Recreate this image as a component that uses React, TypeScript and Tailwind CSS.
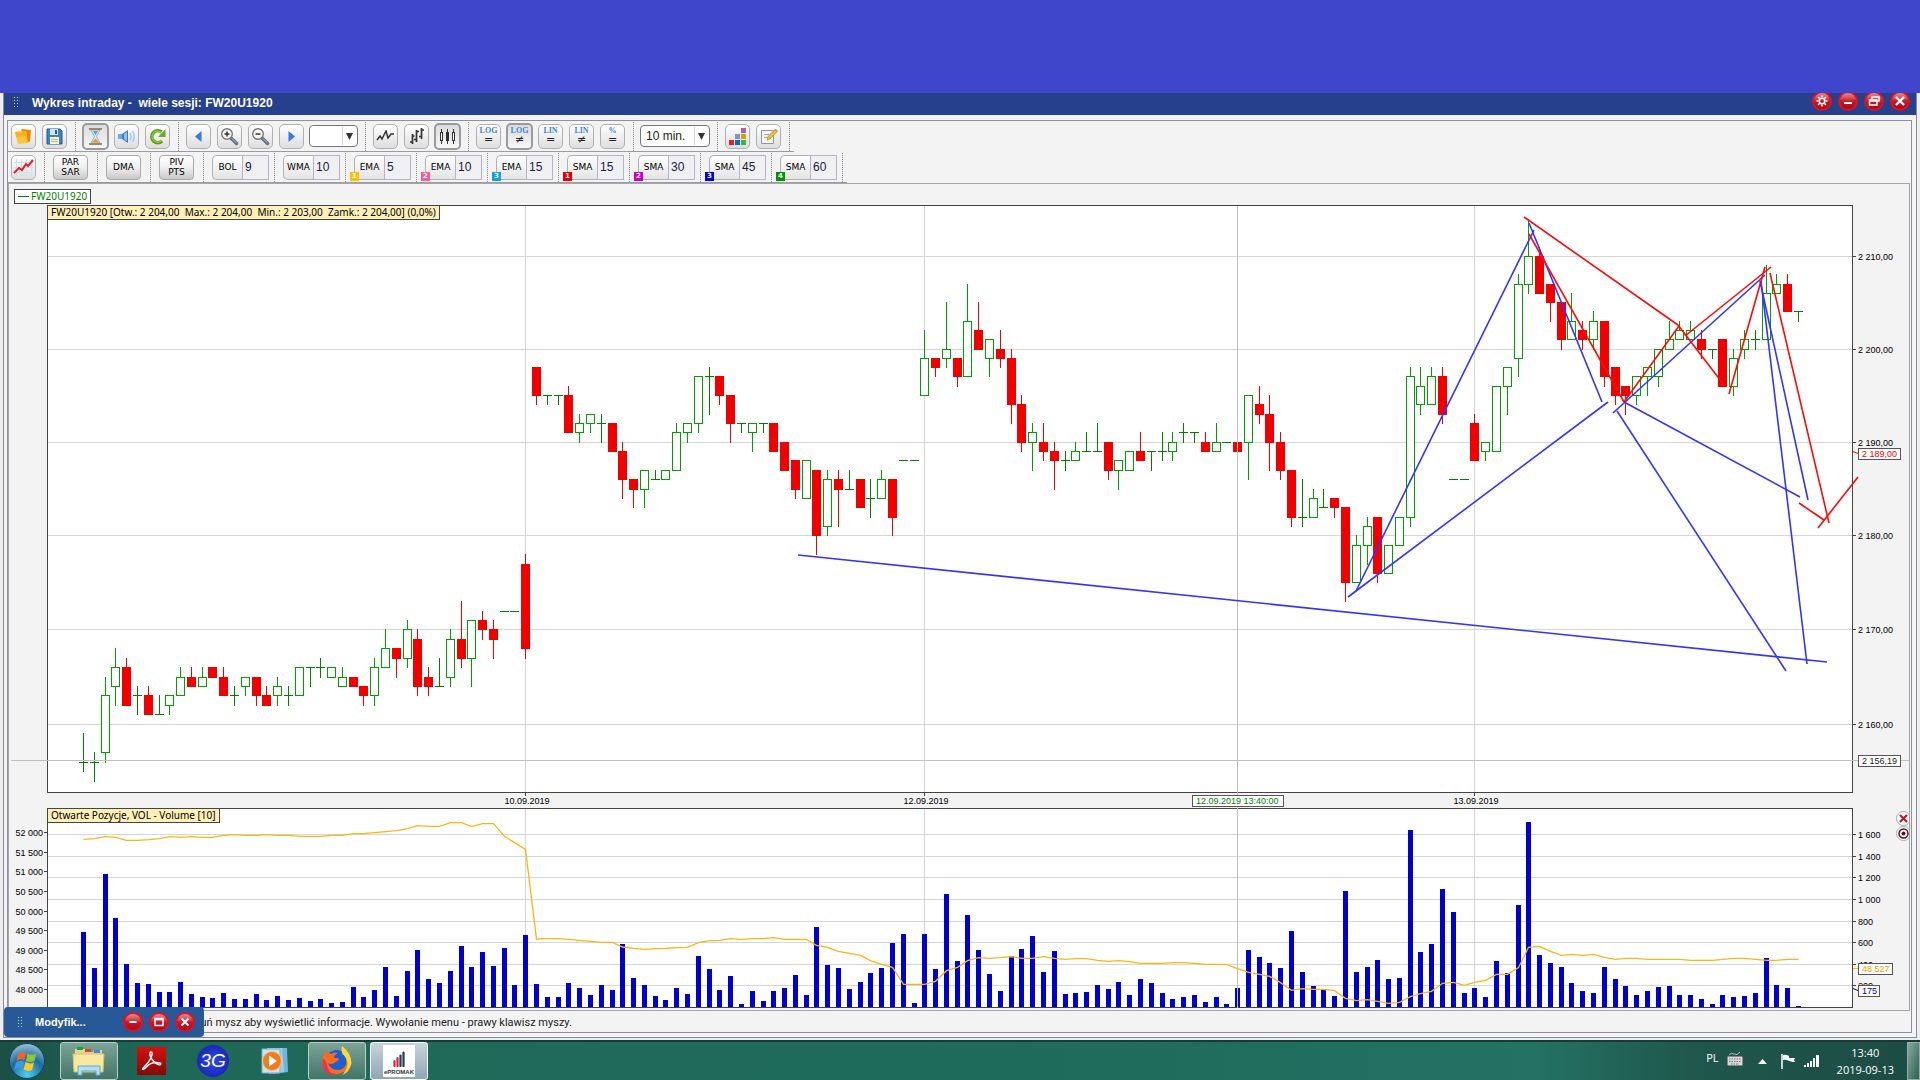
import React from "react";

// open, close, high, low - offsets from PRICE_BASE, one entry per 10 min. candle
const PRICE_BASE = 2100;
const CANDLES: number[][] = [
    [56, 56, 59, 55], [56, 56, 57, 54], [57, 63, 65, 56], [64, 66, 68, 62], [66, 62, 67, 62],
    [63, 63, 64, 61], [63, 61, 64, 61], [61, 61, 63, 61], [62, 63, 63, 61], [63, 65, 66, 63],
    [65, 64, 66, 64], [64, 65, 66, 64], [66, 65, 66, 65], [65, 63, 66, 63], [63, 63, 64, 62],
    [64, 65, 65, 63], [65, 63, 65, 62], [63, 62, 64, 62], [63, 64, 65, 62], [63, 63, 64, 62],
    [63, 66, 66, 63], [66, 66, 66, 64], [66, 66, 67, 65], [65, 66, 66, 65], [64, 65, 66, 64],
    [65, 64, 65, 64], [64, 63, 64, 62], [63, 66, 67, 62], [66, 68, 70, 66], [68, 67, 68, 65],
    [67, 70, 71, 66], [69, 64, 70, 63], [65, 64, 66, 63], [64, 64, 67, 64], [65, 69, 70, 64],
    [69, 67, 73, 66], [67, 71, 71, 64], [71, 70, 72, 69], [70, 69, 71, 67], [72, 72, 72, 72],
    [72, 72, 72, 72], [77, 68, 78, 67], [98, 95, 98, 94], [95, 95, 95, 94], [95, 95, 95, 94],
    [95, 91, 96, 91], [91, 92, 93, 90], [92, 93, 93, 91], [92, 92, 93, 90], [92, 89, 92, 89],
    [89, 86, 90, 84], [86, 85, 86, 83], [85, 87, 87, 83], [86, 86, 87, 86], [86, 87, 87, 86],
    [87, 91, 92, 87], [91, 92, 92, 90], [92, 97, 97, 91], [97, 97, 98, 93], [97, 95, 97, 94],
    [95, 92, 95, 90], [92, 92, 92, 91], [91, 92, 92, 89], [92, 92, 92, 91], [92, 89, 92, 89],
    [90, 87, 90, 87], [88, 85, 88, 84], [84, 88, 88, 84], [87, 80, 87, 78], [81, 86, 87, 80],
    [86, 85, 87, 81], [85, 85, 87, 85], [86, 83, 86, 83], [84, 84, 86, 82], [84, 86, 87, 84],
    [86, 82, 86, 80], [88, 88, 88, 88], [88, 88, 88, 88], [95, 99, 102, 95], [99, 98, 99, 97],
    [99, 100, 105, 98], [99, 97, 99, 96], [97, 103, 107, 97], [102, 100, 105, 100], [99, 101, 101, 97],
    [100, 99, 102, 98], [99, 94, 100, 92], [94, 90, 95, 89], [90, 91, 92, 87], [90, 89, 92, 88],
    [89, 88, 90, 85], [88, 88, 89, 87], [88, 89, 90, 88], [89, 89, 91, 89], [89, 89, 92, 89],
    [90, 87, 90, 86], [87, 88, 88, 85], [87, 89, 89, 87], [89, 88, 91, 88], [89, 89, 89, 87],
    [89, 89, 91, 88], [89, 90, 91, 88], [91, 91, 92, 90], [91, 91, 91, 90], [90, 89, 91, 89],
    [89, 90, 92, 89], [90, 90, 90, 90], [90, 89, 90, 89], [90, 95, 95, 86], [94, 93, 96, 92],
    [93, 90, 95, 87], [90, 87, 91, 86], [87, 82, 87, 81], [82, 82, 86, 81], [82, 84, 85, 82],
    [83, 83, 85, 83], [84, 83, 84, 82], [83, 75, 83, 73], [75, 79, 80, 75], [79, 81, 82, 77],
    [82, 76, 82, 75], [76, 79, 79, 76], [79, 82, 82, 79], [82, 97, 98, 81], [94, 96, 98, 93],
    [94, 97, 98, 94], [97, 93, 98, 92], [86, 86, 86, 86], [86, 86, 86, 86], [92, 88, 93, 88],
    [89, 90, 90, 88], [89, 96, 96, 89], [96, 98, 98, 93], [99, 107, 108, 97], [107, 110, 114, 106],
    [110, 106, 111, 106], [107, 105, 107, 103], [105, 101, 105, 100], [101, 103, 106, 101], [102, 101, 103, 100],
    [101, 103, 104, 100], [103, 97, 103, 96], [98, 95, 98, 94], [96, 95, 96, 93], [95, 97, 97, 94],
    [97, 98, 98, 95], [97, 100, 100, 96], [100, 101, 103, 100], [101, 102, 103, 101], [101, 102, 103, 101],
    [101, 100, 102, 99], [100, 100, 100, 99], [101, 96, 101, 96], [96, 99, 100, 95], [100, 101, 102, 99],
    [101, 101, 102, 100], [101, 106, 109, 101], [106, 107, 108, 106], [107, 104, 108, 104], [104, 104, 104, 103],
];

// thirds of a pixel, measured from the top of the volume strip
const VOLUME = [
    426, 534, 252, 384, 522, 579, 582, 606, 606, 576, 612, 621, 624, 609, 627, 627, 612, 630, 618, 630,
    624, 633, 627, 639, 636, 591, 621, 600, 531, 618, 543, 480, 567, 579, 543, 468, 531, 486, 528, 474,
    585, 435, 582, 621, 621, 579, 594, 615, 585, 600, 462, 564, 585, 618, 630, 594, 612, 498, 537, 600,
    558, 642, 603, 633, 603, 594, 555, 615, 411, 525, 534, 597, 576, 549, 534, 459, 432, 639, 432, 537,
    312, 513, 375, 480, 552, 603, 498, 477, 438, 546, 483, 612, 609, 606, 585, 597, 576, 615, 567, 579,
    609, 627, 621, 615, 636, 621, 642, 594, 480, 501, 519, 534, 423, 546, 588, 600, 618, 303, 546, 531,
    510, 567, 564, 120, 486, 462, 297, 366, 609, 594, 621, 513, 549, 345, 96, 495, 519, 531, 579, 603,
    609, 531, 567, 588, 615, 603, 591, 588, 615, 615, 627, 642, 615, 621, 618, 609, 504, 585, 594, 648,
];

const OPEN_INTEREST = [
    148, 146, 140, 142, 151, 151, 149, 146, 140, 142, 140, 142, 142, 136, 134, 136, 136, 134, 136, 136,
    139, 139, 139, 136, 136, 131, 131, 128, 125, 122, 116, 107, 109, 109, 98, 98, 110, 101, 101, 139,
    158, 178, 447, 446, 446, 448, 451, 454, 457, 457, 471, 475, 478, 476, 475, 473, 472, 458, 452, 451,
    446, 448, 446, 446, 443, 448, 448, 448, 466, 472, 484, 490, 496, 512, 523, 532, 583, 583, 583, 574,
    542, 532, 512, 503, 505, 503, 500, 505, 505, 500, 505, 508, 506, 506, 511, 514, 512, 515, 520, 520,
    520, 518, 518, 520, 523, 523, 523, 536, 547, 553, 559, 578, 601, 596, 598, 598, 602, 625, 632, 629,
    634, 640, 637, 620, 611, 604, 580, 577, 586, 577, 571, 553, 553, 533, 472, 469, 484, 496, 493, 496,
    493, 502, 508, 505, 505, 508, 508, 508, 508, 511, 511, 511, 508, 505, 505, 508, 511, 511, 508, 508,
];

const BLUE_LINES = [
    [798, 555, 1827, 662], [1356, 591, 1534, 230], [1529, 223, 1602, 402], [1348, 597, 1608, 402],
    [1613, 413, 1765, 275], [1624, 402, 1800, 497], [1617, 411, 1786, 671], [1760, 281, 1808, 500],
    [1761, 281, 1807, 664],
];

const RED_LINES = [
    [1524, 217, 1678, 325], [1529, 234, 1624, 402], [1624, 402, 1679, 326], [1678, 325, 1724, 385],
    [1729, 394, 1765, 267], [1685, 336, 1771, 267], [1770, 273, 1829, 523], [1799, 503, 1824, 520],
    [1818, 528, 1858, 477],
];

const SESSIONS = [
    { x: 525, label: "10.09.2019" },
    { x: 924, label: "12.09.2019" },
    { x: 1474, label: "13.09.2019" },
];

const VOL_TICKS = [
    { y: 834, label: "1 600" }, { y: 856, label: "1 400" }, { y: 877, label: "1 200" }, { y: 899, label: "1 000" },
    { y: 921, label: "800" }, { y: 942, label: "600" }, { y: 964, label: "400" }, { y: 985, label: "200" },
];

const OI_TICKS = [
    { y: 832, label: "52 000" }, { y: 852, label: "51 500" }, { y: 871, label: "51 000" },
    { y: 891, label: "50 500" }, { y: 911, label: "50 000" }, { y: 930, label: "49 500" },
    { y: 950, label: "49 000" }, { y: 969, label: "48 500" }, { y: 989, label: "48 000" },
];

const CURSOR_X = 1237;
const AXIS_TEXT = "font-['Liberation_Sans'] text-[9px]";

const candleX = (i: number) => Math.floor(83.5 + i * 10.786);
const priceY = (p: number) => Math.floor(724.35 + 20451 * Math.log(2160 / (PRICE_BASE + p)));

function Candle({ i }: { i: number }) {
    const [open, close, high, low] = CANDLES[i];
    const x = candleX(i);
    const top = priceY(Math.max(open, close));
    const bottom = priceY(Math.min(open, close));
    const hi = priceY(high);
    const lo = priceY(low) + 1;

    if (open === close) {
        return (
            <g fill="#007f00">
                <rect x={x - 4} y={top} width={9} height={1} />
                {lo - hi > 1 && <rect x={x} y={hi} width={1} height={lo - hi} />}
            </g>
        );
    }
    if (open > close) {
        return (
            <g fill="#f20000">
                <rect x={x} y={hi} width={1} height={lo - hi} />
                <rect x={x - 4} y={top} width={9} height={bottom - top + 1} />
            </g>
        );
    }
    return (
        <g>
            <rect x={x} y={hi} width={1} height={lo - hi} fill="#00a000" />
            <rect x={x - 3.5} y={top + 0.5} width={8} height={bottom - top} fill="#fff" stroke="#00a000" />
        </g>
    );
}

function AxisTag({ x, y, width, color, children }: { x: number; y: number; width: number; color: string; children: React.ReactNode }) {
    return (
        <g>
            <rect x={x + 0.5} y={y + 0.5} width={width} height={11} fill="#fff" stroke="#555" />
            <text x={x + 4} y={y + 9} fill={color} className={AXIS_TEXT}>{children}</text>
        </g>
    );
}

function PriceChart() {
    return (
        <svg viewBox="9 205 1900 603" className="block w-full h-auto">
            <rect x={47.5} y={205.5} width={1805} height={587} fill="#fff" stroke="#444" />
            <g fill="#d6d6d6">
                {[110, 100, 90, 80, 70, 60].map((p) => <rect key={p} x={48} y={priceY(p)} width={1804} height={1} />)}
                {SESSIONS.map((s) => <rect key={s.x} x={s.x} y={206} width={1} height={586} />)}
            </g>
            {CANDLES.map((_, i) => <Candle key={i} i={i} />)}
            <g fill="#c0c0c0">
                <rect x={11} y={760} width={1898} height={1} />
                <rect x={CURSOR_X} y={206} width={1} height={602} />
            </g>
            <g strokeWidth={1.6} fill="none">
                {BLUE_LINES.map((l, i) => <line key={i} x1={l[0]} y1={l[1]} x2={l[2]} y2={l[3]} stroke="#3434fa" />)}
                {RED_LINES.map((l, i) => <line key={i} x1={l[0]} y1={l[1]} x2={l[2]} y2={l[3]} stroke="#fa0a0a" />)}
            </g>
            {[110, 100, 90, 80, 70, 60].map((p) => (
                <g key={p}>
                    <rect x={1853} y={priceY(p)} width={3} height={1} fill="#444" />
                    <text x={1858} y={priceY(p) + 4} className={AXIS_TEXT}>{`2 ${PRICE_BASE + p - 2000},00`}</text>
                </g>
            ))}
            <path d="M1853 451.500L1858 453.500" stroke="#f20000" />
            <AxisTag x={1858} y={448} width={42} color="#f20000">2 189,00</AxisTag>
            <AxisTag x={1858} y={755} width={42} color="#222">2 156,19</AxisTag>
            {SESSIONS.map((s) => (
                <g key={s.x}>
                    <rect x={s.x} y={793} width={1} height={3} fill="#444" />
                    <text x={s.x + 2} y={804} textAnchor="middle" className={AXIS_TEXT}>{s.label}</text>
                </g>
            ))}
            <AxisTag x={1192} y={795} width={91} color="#008000">12.09.2019 13:40:00</AxisTag>
        </svg>
    );
}

function VolumeChart() {
    return (
        <svg viewBox="9 808 1900 202" className="block w-full h-auto">
            <rect x={47.5} y={808.5} width={1805} height={199} fill="#fff" stroke="#444" />
            <g fill="#d6d6d6">
                {VOL_TICKS.map((t) => <rect key={t.y} x={48} y={t.y} width={1804} height={1} />)}
                {SESSIONS.map((s) => <rect key={s.x} x={s.x} y={809} width={1} height={198} />)}
            </g>
            <g fill="#0000d0">
                {VOLUME.map((v, i) => {
                    const top = 790 + v / 3;
                    return <rect key={i} x={candleX(i) - 2} y={top} width={5} height={1007 - top} />;
                })}
            </g>
            <rect x={CURSOR_X} y={808} width={1} height={200} fill="#c0c0c0" />
            <polyline
                points={OPEN_INTEREST.map((v, i) => `${candleX(i) + 0.5},${790 + v / 3}`).join(" ")}
                fill="none"
                stroke="#fbb616"
                strokeWidth={1.3}
            />
            {OI_TICKS.map((t) => (
                <g key={t.y}>
                    <rect x={44} y={t.y} width={3} height={1} fill="#444" />
                    <text x={43} y={t.y + 4} textAnchor="end" className={AXIS_TEXT}>{t.label}</text>
                </g>
            ))}
            {VOL_TICKS.map((t) => (
                <g key={t.y}>
                    <rect x={1853} y={t.y} width={3} height={1} fill="#444" />
                    <text x={1858} y={t.y + 4} className={AXIS_TEXT}>{t.label}</text>
                </g>
            ))}
            <path d="M1853 968.500h5" stroke="#fbb616" />
            <AxisTag x={1858} y={963} width={34} color="#f0a000">48 527</AxisTag>
            <path d="M1853 988.500l5 2" stroke="#0000d0" />
            <AxisTag x={1858} y={985} width={21} color="#0000b0">175</AxisTag>
        </svg>
    );
}

function Slot({ children, label, pressed }: { children: React.ReactNode; label: string; pressed?: boolean }) {
    return (
        <div className="w-[31px] flex justify-center items-center">
            <button
                aria-label={label}
                className={pressed
                    ? "w-[27px] h-[27px] flex items-center justify-center rounded-[5px] border-2 border-[#9a9a9e] bg-linear-to-b from-[#dcdcde] to-[#f6f6f6]"
                    : "w-[25px] h-[25px] flex items-center justify-center rounded-[5px] border border-[#b0b0b2] bg-linear-to-b from-white to-[#dedede]"}
            >
                {children}
            </button>
        </div>
    );
}

function Sep() {
    return (
        <div className="w-[10px] flex justify-center">
            <div className="h-[29px] border-l border-dotted border-[#8a8a8e]" />
        </div>
    );
}

function Combo({ value, label, wide }: { value: string; label: string; wide?: boolean }) {
    return (
        <div className={wide ? "relative mx-[2px] w-[70px] h-[22px]" : "relative mx-[2px] w-[49px] h-[22px]"}>
            <select
                aria-label={label}
                defaultValue={value}
                className="appearance-none block w-full h-full rounded-[4px] border border-[#77777b] bg-white pl-[5px] text-[12px] leading-[20px] text-[#222]"
            >
                <option value={value}>{value}</option>
            </select>
            <div className="pointer-events-none absolute right-[2px] top-[2px] bottom-[2px] w-[14px] border-l border-[#d5d5d8] flex items-center justify-center">
                <svg width="7" height="7" viewBox="0 0 7 7"><path d="M0 0h7L3.500 7z" fill="#333" /></svg>
            </div>
        </div>
    );
}

function ScaleIcon({ top, sign }: { top: string; sign: string }) {
    return (
        <span className="flex flex-col items-center font-['Liberation_Serif']">
            <span className="text-[8px] leading-[8px] font-bold text-[#3f86d8]">{top}</span>
            <span className="font-['DejaVu_Sans'] text-[11px] leading-[10px] text-[#222]">{sign}</span>
        </span>
    );
}

const LABEL = "font-['DejaVu_Sans'] text-[9px] leading-[10px] text-black";

function WideButton({ lines }: { lines: string[] }) {
    return (
        <div className="w-[43px] flex items-center justify-center">
            <button className={`${LABEL} w-[35px] h-[25px] flex flex-col items-center justify-center rounded-[4px] border border-[#aaa] bg-linear-to-b from-white via-[#efefef] to-[#c8c8c8]`}>
                {lines.map((l) => <span key={l}>{l}</span>)}
            </button>
        </div>
    );
}

const INDICATORS = [
    { name: "BOL", value: "9" },
    { name: "WMA", value: "10" },
    { name: "EMA", value: "5", badge: "1", color: "bg-[#ffc000]" },
    { name: "EMA", value: "10", badge: "2", color: "bg-[#ff5a92]" },
    { name: "EMA", value: "15", badge: "3", color: "bg-[#10a0e8]" },
    { name: "SMA", value: "15", badge: "1", color: "bg-[#e80000]" },
    { name: "SMA", value: "30", badge: "2", color: "bg-[#c800c8]" },
    { name: "SMA", value: "45", badge: "3", color: "bg-[#0000e8]" },
    { name: "SMA", value: "60", badge: "4", color: "bg-[#009600]" },
];

function Indicator({ name, value, badge, color }: { name: string; value: string; badge?: string; color?: string }) {
    return (
        <div className="relative w-[61px] pl-[4px] flex items-center">
            <button className={`${LABEL} w-[30px] h-[25px] shrink-0 rounded-l-[5px] border border-r-0 border-[#b0b0b2] bg-linear-to-b from-white to-[#e4e4e4]`}>{name}</button>
            <input
                aria-label={`${name} ${badge ?? ""} okres`}
                defaultValue={value}
                className="w-[27px] h-[25px] border border-[#b4b4c8] bg-[#f0f0f2] pl-[2px] text-[12px] text-[#1c1c3c]"
            />
            {badge && (
                <span className={`${color} absolute left-0 -bottom-[1px] w-[9px] h-[9px] text-center font-['DejaVu_Sans'] text-[7px] leading-[9px] font-bold text-white`}>{badge}</span>
            )}
        </div>
    );
}

function MagnifierIcon({ plus }: { plus?: boolean }) {
    return (
        <svg width="19" height="19" viewBox="0 0 19 19">
            <path d="M11 11l5.500 5.500" stroke="#68758a" strokeWidth="3.500" strokeLinecap="round" />
            <path d="M12 11.500l4 4" stroke="#a6b4c8" strokeWidth="1" />
            <circle cx="7" cy="7" r="5.300" fill="#f7f7f2" stroke="#777" strokeWidth="1.400" />
            <path d={plus ? "M4.500 7h5M7 4.500v5" : "M4.500 7h5"} stroke="#333" strokeWidth="1.500" />
        </svg>
    );
}

function MainToolbar() {
    return (
        <div className="flex items-center w-fit h-[31px] border-b border-[#9c9ca6]">
            <Slot label="Otwórz">
                <svg width="19" height="19" viewBox="0 0 19 19">
                    <path d="M7 2l10 1-1 11-3 2z" fill="#e98b00" />
                    <path d="M1 5l11-1 2 12-10 1z" fill="#ffc53c" />
                    <path d="M1 5l11-1 1 5-11 1z" fill="#ffb01c" />
                </svg>
            </Slot>
            <Slot label="Zapisz">
                <svg width="17" height="17" viewBox="0 0 17 17">
                    <path d="M1 1h13l2 2v13H1z" fill="#3d83bc" stroke="#24598c" />
                    <rect x="4" y="1" width="8" height="6" fill="#cfe4f2" />
                    <rect x="9" y="2" width="2" height="4" fill="#28588c" />
                    <rect x="4" y="9" width="9" height="7" fill="#f6f2d8" />
                    <path d="M5 11.500h7M5 13.500h7" stroke="#c8bd8a" />
                </svg>
            </Slot>
            <Sep />
            <Slot label="Odświeżanie" pressed>
                <svg width="15" height="19" viewBox="0 0 15 19">
                    <path d="M3 3h9L8.500 9.500 12 16H3l3.500-6.500z" fill="#d9eaf5" stroke="#8fb4cc" />
                    <path d="M5 4h5L7.500 8z" fill="#5f9cc4" />
                    <path d="M4 15.500l3.500-4 3.500 4z" fill="#e89a30" />
                    <path d="M1 1h13v2H1zM1 16h13v2H1z" fill="#a08668" />
                </svg>
            </Slot>
            <Slot label="Dźwięk">
                <svg width="19" height="15" viewBox="0 0 19 15">
                    <path d="M1 5h4v5H1z" fill="#79a9dc" />
                    <path d="M5 5l6-4v13l-6-4z" fill="#3e82c6" />
                    <path d="M7 5l3-2v9l-3-2z" fill="#8ec0ec" />
                    <path d="M13 4q2 3.500 0 7M15.500 2q3.500 5.500 0 11" stroke="#9fc8ec" strokeWidth="1.500" fill="none" />
                </svg>
            </Slot>
            <Slot label="Przeładuj">
                <svg width="18" height="17" viewBox="0 0 18 17">
                    <path d="M13 13A6 6 0 1 1 12.500 4" fill="none" stroke="#5f9a1c" strokeWidth="3.600" />
                    <path d="M12.500 12.500A5.500 5.500 0 1 1 12 4.500" fill="none" stroke="#8cc63c" strokeWidth="1.400" />
                    <path d="M16.500 1v8H9z" fill="#6ea826" />
                </svg>
            </Slot>
            <Sep />
            <Slot label="Wstecz">
                <svg width="7" height="11" viewBox="0 0 7 11"><path d="M6.500 0v11L0 5.500z" fill="#3a78e8" /></svg>
            </Slot>
            <Slot label="Powiększ"><MagnifierIcon plus /></Slot>
            <Slot label="Pomniejsz"><MagnifierIcon /></Slot>
            <Slot label="Dalej">
                <svg width="7" height="11" viewBox="0 0 7 11"><path d="M.5 0v11L7 5.500z" fill="#3a78e8" /></svg>
            </Slot>
            <Combo value="" label="Zakres" />
            <Sep />
            <Slot label="Wykres liniowy">
                <svg width="19" height="13" viewBox="0 0 19 13"><path d="M1 10l3-4 2 3 4-8 2 7 3-4h3" stroke="#333" strokeWidth="1.500" fill="none" /></svg>
            </Slot>
            <Slot label="Wykres słupkowy">
                <svg width="16" height="18" viewBox="0 0 16 18"><path d="M3.500 7v10M1 15h2.500M3.500 9h2M7.500 3v12M5 12.500h2.500M7.500 4.500h2.500M12.500 1v11M10 9.500h2.500M12.500 3H15" stroke="#333" strokeWidth="1.700" fill="none" /></svg>
            </Slot>
            <Slot label="Wykres świecowy" pressed>
                <svg width="17" height="15" viewBox="0 0 17 15">
                    <path d="M2.500 0v15M8.500 0v15M14.500 0v15" stroke="#333" />
                    <rect x="1.500" y="3.500" width="2" height="8" fill="#fff" stroke="#333" />
                    <rect x="7.500" y="3.500" width="2" height="8" fill="#333" stroke="#333" />
                    <rect x="13.500" y="3.500" width="2" height="8" fill="#fff" stroke="#333" />
                </svg>
            </Slot>
            <Sep />
            <Slot label="Logarytmiczna, równa"><ScaleIcon top="LOG" sign="=" /></Slot>
            <Slot label="Logarytmiczna, różna" pressed><ScaleIcon top="LOG" sign="≠" /></Slot>
            <Slot label="Liniowa, równa"><ScaleIcon top="LIN" sign="=" /></Slot>
            <Slot label="Liniowa, różna"><ScaleIcon top="LIN" sign="≠" /></Slot>
            <Slot label="Procentowa"><ScaleIcon top="%" sign="=" /></Slot>
            <Sep />
            <Combo value="10 min." label="Interwał" wide />
            <Sep />
            <Slot label="Kolory">
                <svg width="17" height="17" viewBox="0 0 17 17">
                    <rect x="12" width="5" height="5" fill="#a864a8" />
                    <rect x="6" y="6" width="5" height="5" fill="#8296cc" />
                    <rect x="12" y="6" width="5" height="5" fill="#d8a000" />
                    <rect y="12" width="5" height="5" fill="#ee1c24" />
                    <rect x="6" y="12" width="5" height="5" fill="#0072bc" />
                    <rect x="12" y="12" width="5" height="5" fill="#39b54a" />
                </svg>
            </Slot>
            <Slot label="Notatki">
                <svg width="18" height="17" viewBox="0 0 18 17">
                    <path d="M1.500 2.500h12v13h-12z" fill="#f2f4f7" stroke="#8d97a5" />
                    <path d="M4 6.500h5M4 9.500h3" stroke="#9aa" />
                    <path d="M7 12l1-3.500L15.500 1l2 2.200L10 11z" fill="#f2c12e" stroke="#b58512" strokeWidth=".7" />
                    <path d="M14.500 2l1-1.200 2 2.200-1 1z" fill="#e58a7a" />
                </svg>
            </Slot>
            <Sep />
        </div>
    );
}

function IndicatorToolbar() {
    return (
        <div className="flex items-center w-fit h-[31px] border-b border-[#9c9ca6]">
            <Slot label="Wskaźniki">
                <svg width="21" height="19" viewBox="0 0 21 19">
                    <path d="M3.500 1v17M8.500 1v17M13.500 1v17M18.500 1v17M1 4.500h19M1 9.500h19M1 14.500h19" stroke="#cfdfee" />
                    <path d="M1 15l5-5 3 2 4-6 2 2 5-6" stroke="#d8242a" strokeWidth="2" fill="none" />
                </svg>
            </Slot>
            <Sep />
            <WideButton lines={["PAR", "SAR"]} />
            <Sep />
            <WideButton lines={["DMA"]} />
            <Sep />
            <WideButton lines={["PIV", "PTS"]} />
            {INDICATORS.map((ind, i) => (
                <React.Fragment key={i}>
                    <Sep />
                    <Indicator {...ind} />
                </React.Fragment>
            ))}
            <Sep />
        </div>
    );
}

function RoundButton({ label, children }: { label: string; children: React.ReactNode }) {
    return (
        <button aria-label={label} className="w-[20px] h-[20px] shrink-0 rounded-full border-2 border-[#d81428] bg-linear-to-b from-[#e88890] via-[#c81828] to-[#a80818] flex items-center justify-center">
            <svg width="12" height="12" viewBox="0 0 12 12" fill="none" stroke="#fff" strokeWidth="2">{children}</svg>
        </button>
    );
}

function Grip() {
    return (
        <svg width="5" height="11" viewBox="0 0 5 11" fill="#c8d4f0">
            {[0, 3, 6, 9].map((y) => <g key={y}><rect y={y} width="1" height="1" /><rect x="3" y={y} width="1" height="1" /></g>)}
        </svg>
    );
}

function TitleBar() {
    return (
        <div className="flex items-start h-[22px] pl-[10px] pr-[6px] bg-[#26408b] overflow-hidden">
            <div className="flex flex-1 items-center h-[19px] gap-[13px]">
                <Grip />
                <h1 className="text-[12px] font-bold text-white whitespace-pre">Wykres intraday -  wiele sesji: FW20U1920</h1>
            </div>
            <div className="flex gap-[6px] -mt-[2px]">
                <RoundButton label="Ustawienia">
                    <circle cx="6" cy="6" r="2.800" strokeWidth="1.600" />
                    <path d="M6 .5v2M6 9.500v2M.5 6h2M9.500 6h2M2 2l1.500 1.500M8.500 8.500L10 10M10 2L8.500 3.500M3.500 8.500L2 10" strokeWidth="1.500" />
                </RoundButton>
                <RoundButton label="Minimalizuj"><path d="M2 8h8" /></RoundButton>
                <RoundButton label="Przywróć">
                    <path d="M4 4V2h7v4H9.500" strokeWidth="1.500" />
                    <path d="M1.500 5h7.500v5H1.500zM1.500 6h7" strokeWidth="1.500" />
                </RoundButton>
                <RoundButton label="Zamknij"><path d="M2 2l8 8M10 2l-8 8" strokeWidth="2.400" /></RoundButton>
            </div>
        </div>
    );
}

const INFO = "font-['Noto_Sans'] text-[10px] leading-[13px] text-black whitespace-pre absolute left-[38px] top-0 h-[15px] px-[3px] border border-[#444] bg-[#fff0b8]";

function MinimizedWindow() {
    return (
        <div className="absolute left-0 bottom-0 w-[200px] h-[30px] rounded-[4px] bg-[#275898] flex items-center pl-[14px] pr-[9px]">
            <Grip />
            <span className="ml-[12px] flex-1 text-[11px] font-bold text-white">Modyfik...</span>
            <div className="flex gap-[6px]">
                <RoundButton label="Minimalizuj"><path d="M2.500 6h7" /></RoundButton>
                <RoundButton label="Maksymalizuj"><path d="M2 2.500h8v7H2zM2 3.500h8" strokeWidth="1.500" /></RoundButton>
                <RoundButton label="Zamknij"><path d="M2.500 2.500l7 7M9.500 2.500l-7 7" /></RoundButton>
            </div>
        </div>
    );
}

function Taskbar() {
    return (
        <footer className="flex items-center h-[40px] border-t-2 border-[#123c34] bg-[linear-gradient(to_right,#1b5044_0%,#1f6858_8%,#1f6c5c_60%,#237264_80%,#1f574c_88%,#1c4c43_100%)]">
            <button aria-label="Start" className="ml-[8px] mr-[14px]">
                <svg width="38" height="38" viewBox="0 0 38 38">
                    <defs>
                        <radialGradient id="orb" cx=".5" cy=".9" r=".9">
                            <stop offset="0" stopColor="#4ed0f4" />
                            <stop offset=".55" stopColor="#1d6aa0" />
                            <stop offset="1" stopColor="#9cc4d8" />
                        </radialGradient>
                    </defs>
                    <circle cx="19" cy="19" r="17.500" fill="url(#orb)" stroke="#123d52" />
                    <path d="M10 12q4-3 8-1l-1.500 7q-4-2-8 1z" fill="#f0652a" />
                    <path d="M19.500 11.500q4 2.500 9 0l-2 7.500q-4 2-8.500 0z" fill="#8cc83c" />
                    <path d="M8 20.500q4-3 8-1l-1.500 7q-4-2-8 1z" fill="#3e9ae0" />
                    <path d="M17.500 20q4.500 2.500 8.500.5l-2 7.500q-4 2-8.500-.5z" fill="#fcc82c" />
                </svg>
            </button>
            <button aria-label="Eksplorator" className="w-[58px] h-[38px] rounded-[3px] border border-[#b8d0c8] bg-linear-to-b from-[#7da398] to-[#3f7668] flex items-center justify-center">
                <svg width="34" height="30" viewBox="0 0 34 30">
                    <path d="M3 3h10l2 3h6l1-2h8v20H3z" fill="#e8d48a" />
                    <path d="M5 1h6v3H5z" fill="#20a040" /><path d="M13 3h6v3h-6z" fill="#e04030" /><path d="M22 4h6v3h-6z" fill="#3890d8" />
                    <path d="M1 8h31l-1 18H2z" fill="#f8e8a0" stroke="#d8c070" />
                    <path d="M6 29v-9h22v9h-4v-4H10v4z" fill="#b4def4" stroke="#5ea8d0" />
                </svg>
            </button>
            <button aria-label="Acrobat Reader" className="ml-[19px] w-[29px] h-[28px] bg-linear-to-b from-[#d81010] to-[#860808] flex items-center justify-center">
                <svg width="22" height="22" viewBox="0 0 22 22" fill="none" stroke="#fff" strokeWidth="1.400">
                    <path d="M10 2c3 0 0 9-7 15-2 2-2 3 0 2 4-3 6-8 16-6 2 1 0 3-3 1-4-2-8-8-7-11 0-1 1-1 1-1z" />
                </svg>
            </button>
            <button aria-label="3G" className="ml-[31px] w-[32px] h-[32px] rounded-full bg-radial from-[#3048e8] to-[#1018a8] text-[19px] leading-[30px] italic text-white">3G</button>
            <button aria-label="Media Player" className="ml-[31px]">
                <svg width="30" height="28" viewBox="0 0 30 28">
                    <path d="M12 1h15l1 24-15 2z" fill="#6fb6dc" /><path d="M7 1h15l2 24-15 2z" fill="#9ed0ea" />
                    <path d="M2 2h18v24H2z" fill="#c6e4f4" stroke="#78aeca" />
                    <circle cx="12" cy="14" r="9.500" fill="#f07c1c" stroke="#fbc48a" />
                    <path d="M9 8.500v11l8-5.500z" fill="#fff" />
                </svg>
            </button>
            <button aria-label="Firefox" className="ml-[18px] w-[58px] h-[38px] rounded-[3px] border border-[#b8d0c8] bg-linear-to-b from-[#7da398] to-[#3f7668] flex items-center justify-center">
                <svg width="32" height="32" viewBox="0 0 32 32">
                    <circle cx="16" cy="17" r="12" fill="#1c60d0" />
                    <path d="M5 6q-4 6-4 12a15 14 0 0 0 29 1q1-9-7-17 1 4 0 6 3 6 2 11-2 6-9 6-7-1-9-7 3 2 6 0l5-3-1-2h-4q0-3 4-5-4-1-7 1Q7 8 5 6z" fill="#ff6a1c" />
                    <path d="M21 1q9 7 9.500 17-2 9-9 12 5-6 5-12-1-6-5-9-2-4-.5-8z" fill="#ffd83c" />
                    <path d="M2 13q-3 15 12 18-8-5-8-12z" fill="#f03050" />
                </svg>
            </button>
            <button aria-label="ePROMAK" className="ml-[4px] w-[58px] h-[38px] rounded-[3px] border border-white bg-linear-to-b from-[#c8d4dc] to-[#8fa6b6] flex items-center justify-center">
                <span className="w-[32px] h-[32px] bg-white flex flex-col items-center justify-end">
                    <svg width="12" height="16" viewBox="0 0 12 16">
                        <path d="M1.500 15V10M4.500 15V7" stroke="#d82838" strokeWidth="2.200" strokeLinecap="round" /><path d="M7.500 15V4.500M10.500 15V1.500" stroke="#26385c" strokeWidth="2.200" strokeLinecap="round" />
                    </svg>
                    <span className="text-[6px] leading-[10px] font-bold text-[#333]">ePROMAK</span>
                </span>
            </button>

            <div className="ml-auto flex items-center font-['Open_Sans'] text-white">
                <span className="text-[11px] mr-[8px] -mt-[5px]">PL</span>
                <svg width="16" height="16" viewBox="0 0 16 16" className="mr-[15px] -mt-[4px]">
                    <path d="M2 4q2-3 5-1t6-2" stroke="#bbb" fill="none" />
                    <rect x=".5" y="5.500" width="15" height="9" rx="1" fill="#d8d8d8" stroke="#888" />
                    <path d="M2 8h12M2 10.500h12M4 13h8" stroke="#777" strokeDasharray="1.500 1" />
                </svg>
                <svg width="9" height="5" viewBox="0 0 9 5" className="mr-[13px]"><path d="M4.500 0L9 5H0z" fill="#fff" /></svg>
                <svg width="17" height="17" viewBox="0 0 17 17" className="mr-[7px]">
                    <path d="M2 1v15" stroke="#fff" strokeWidth="1.500" /><path d="M3 2q3-1 6 1v5q-3-2-6-1zM9 5q3 0 6 0l-1 2 1 2q-3 0-6-1z" fill="#fff" />
                </svg>
                <svg width="16" height="12" viewBox="0 0 16 12" className="mr-[17px]" fill="#fff">
                    <rect y="10" width="2" height="2" /><rect x="3" y="8" width="2" height="4" /><rect x="6" y="6" width="2" height="6" />
                    <rect x="9" y="3" width="2" height="9" /><rect x="12" width="3" height="12" />
                </svg>
                <div className="flex flex-col items-center text-[11px] leading-[17px] mr-[13px]">
                    <time>13:40</time>
                    <time>2019-09-13</time>
                </div>
                <button aria-label="Pokaż pulpit" className="w-[13px] h-[38px] border border-[#8fb0a6] bg-linear-to-br from-[#8aa8a0] to-[#2b6054]" />
            </div>
        </footer>
    );
}

export default function App() {
    return (
        <div className="font-['Liberation_Sans',sans-serif] bg-[#eeeef0]">
            <div className="h-[93px] bg-[#4046cc]" />

            <main className="relative ml-[3px] mr-[3px] border-x border-b border-[#8a8a94] bg-[#f3f3f3] pb-[4px]">
                <TitleBar />
                <section className="mt-[5px] ml-[3px] mr-[4px] border border-[#9090a0]">
                    <MainToolbar />
                    <IndicatorToolbar />

                    <div className="mr-[1px] border border-[#a6a6a6]">
                        <div className="h-[21px] pt-[5px] pl-[5px]">
                            <span className="flex items-center w-fit h-[15px] px-[3px] border border-[#444] bg-white font-['Noto_Sans'] text-[10px] text-[#008000]">
                                <span className="w-[11px] border-t border-[#008000] mr-[2px]" />
                                FW20U1920
                            </span>
                        </div>
                        <div className="relative">
                            <PriceChart />
                            <p className={INFO}>FW20U1920 [Otw.: 2 204,00  Max.: 2 204,00  Min.: 2 203,00  Zamk.: 2 204,00] (0,0%)</p>
                        </div>
                        <div className="relative overflow-hidden">
                            <VolumeChart />
                            <p className={INFO}>Otwarte Pozycje, VOL - Volume [10]</p>
                            <div className="absolute -right-[2px] top-[3px] flex flex-col">
                                <button aria-label="Usuń wskaźnik" className="w-[15px] h-[15px] rounded-full border border-[#aaa] bg-white flex items-center justify-center">
                                    <svg width="9" height="9" viewBox="0 0 9 9"><path d="M1 1l7 7M8 1L1 8" stroke="#c01020" strokeWidth="2" /></svg>
                                </button>
                                <button aria-label="Ustawienia wskaźnika" className="w-[15px] h-[15px] rounded-full border border-[#aaa] bg-white flex items-center justify-center">
                                    <svg width="11" height="11" viewBox="0 0 11 11"><circle cx="5.500" cy="5.500" r="4.500" fill="none" stroke="#5c1028" strokeWidth="1.500" /><circle cx="5.500" cy="5.500" r="2" fill="#5c1028" /></svg>
                                </button>
                            </div>
                        </div>
                    </div>

                    <p className="h-[21px] pl-[165px] font-['Roboto'] text-[11px] leading-[23px] text-[#222]">Przesuń mysz aby wyświetlić informacje. Wywołanie menu - prawy klawisz myszy.</p>
                </section>
                <MinimizedWindow />
            </main>
            <div className="h-[2px]" />
            <Taskbar />
        </div>
    );
}
